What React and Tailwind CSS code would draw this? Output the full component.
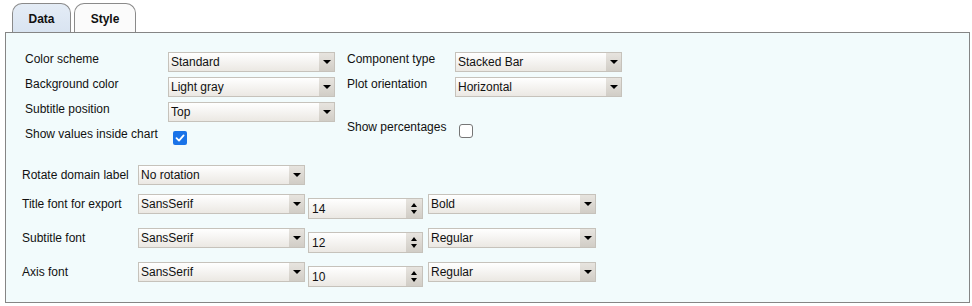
import React from "react";

function Select({ value, w = "w-[167px]" }) {
  return (
    <div className={`flex h-[20px] ${w} border border-[#c6c2bb] bg-linear-to-b from-white to-[#ebe8e3]`}>
      <span className="flex-1 pl-[2px] leading-[18px] text-[12px] text-[#111] whitespace-nowrap overflow-hidden">{value}</span>
      <span className="w-[15px] h-full flex items-center justify-center bg-linear-to-b from-[#e7e4df] to-[#d1cdc6]">
        <span className="block w-0 h-0 border-l-[4px] border-r-[4px] border-t-[4px] border-l-transparent border-r-transparent border-t-black" />
      </span>
    </div>
  );
}

function Spinner({ value }) {
  return (
    <div className="flex mt-[4px] h-[21px] w-[115px] border border-[#c6c2bb] bg-linear-to-b from-white to-[#ebe8e3]">
      <span className="flex-1 pl-[3px] leading-[20px] text-[12px] text-[#111]">{value}</span>
      <span className="w-[16px] h-full flex flex-col items-center justify-center gap-[3px] bg-linear-to-b from-[#e7e4df] to-[#d1cdc6]">
        <span className="block w-0 h-0 border-l-[3px] border-r-[3px] border-b-[4px] border-l-transparent border-r-transparent border-b-black" />
        <span className="block w-0 h-0 border-l-[3px] border-r-[3px] border-t-[4px] border-l-transparent border-r-transparent border-t-black" />
      </span>
    </div>
  );
}

function Checked() {
  return (
    <span className="w-[14px] h-[14px] rounded-[2px] bg-[#1a73e8] flex items-center justify-center">
      <svg width="10" height="10" viewBox="0 0 10 10">
        <path d="M1.5 5.2 L4 7.6 L8.6 2.4" fill="none" stroke="white" strokeWidth="1.8" strokeLinecap="round" strokeLinejoin="round" />
      </svg>
    </span>
  );
}

function Unchecked() {
  return <span className="block w-[14px] h-[14px] rounded-[3px] bg-white border border-[#767676]" />;
}

export default function App() {
  return (
    <div className="w-[972px] h-[306px] bg-white overflow-hidden font-['Liberation_Sans',Arial,sans-serif] text-[12px] text-[#111]">
      <div className="flex items-end h-[32px] pl-[12px] gap-[3px]">
        <div className="w-[59px] h-[29px] rounded-t-[10px] border border-b-0 border-[#8a8a8a] bg-linear-to-b from-[#e4ecf6] to-[#d9e4f1] flex items-center justify-center font-bold leading-none pt-[2px]">
          Data
        </div>
        <div className="w-[62px] h-[29px] rounded-t-[10px] border border-b-0 border-[#8a8a8a] bg-[#fbfbfb] flex items-center justify-center font-bold leading-none pt-[2px]">
          Style
        </div>
      </div>
      <div className="ml-[5px] w-[965px] h-[271px] border border-[#858585] bg-[#f2fbfc]">
        <div className="h-[132px] pt-[18px] pl-[19px] flex">
          <div className="flex flex-col w-[322px]">
            <div className="flex h-[25px]">
              <span className="w-[143px] leading-[16px]">Color scheme</span>
              <div className="mt-[1px]"><Select value="Standard" /></div>
            </div>
            <div className="flex h-[25px]">
              <span className="w-[143px] leading-[16px]">Background color</span>
              <div className="mt-[1px]"><Select value="Light gray" /></div>
            </div>
            <div className="flex h-[25px]">
              <span className="w-[143px] leading-[16px]">Subtitle position</span>
              <div className="mt-[1px]"><Select value="Top" /></div>
            </div>
            <div className="flex h-[20px]">
              <span className="w-[148px] leading-[16px] whitespace-nowrap">Show values inside chart</span>
              <div className="mt-[5px]"><Checked /></div>
            </div>
          </div>
          <div className="flex flex-col">
            <div className="flex h-[25px]">
              <span className="w-[108px] leading-[16px]">Component type</span>
              <div className="mt-[1px]"><Select value="Stacked Bar" /></div>
            </div>
            <div className="flex h-[25px]">
              <span className="w-[108px] leading-[16px]">Plot orientation</span>
              <div className="mt-[1px]"><Select value="Horizontal" /></div>
            </div>
            <div className="flex mt-[18px]">
              <span className="w-[112px] leading-[16px] whitespace-nowrap">Show percentages</span>
              <div className="mt-[5px]"><Unchecked /></div>
            </div>
          </div>
        </div>
        <div className="flex flex-col gap-[9px] pl-[16px]">
          <div className="flex items-start">
            <span className="w-[116px] h-[20px] leading-[20px] whitespace-nowrap">Rotate domain label</span>
            <Select value="No rotation" />
          </div>
          <div className="flex items-start">
            <span className="w-[116px] h-[20px] leading-[20px] whitespace-nowrap">Title font for export</span>
            <Select value="SansSerif" />
            <div className="ml-[3px]"><Spinner value="14" /></div>
            <div className="ml-[5px]"><Select value="Bold" w="w-[168px]" /></div>
          </div>
          <div className="flex items-start">
            <span className="w-[116px] h-[20px] leading-[20px] whitespace-nowrap">Subtitle font</span>
            <Select value="SansSerif" />
            <div className="ml-[3px]"><Spinner value="12" /></div>
            <div className="ml-[5px]"><Select value="Regular" w="w-[168px]" /></div>
          </div>
          <div className="flex items-start">
            <span className="w-[116px] h-[20px] leading-[20px] whitespace-nowrap">Axis font</span>
            <Select value="SansSerif" />
            <div className="ml-[3px]"><Spinner value="10" /></div>
            <div className="ml-[5px]"><Select value="Regular" w="w-[168px]" /></div>
          </div>
        </div>
      </div>
    </div>
  );
}
